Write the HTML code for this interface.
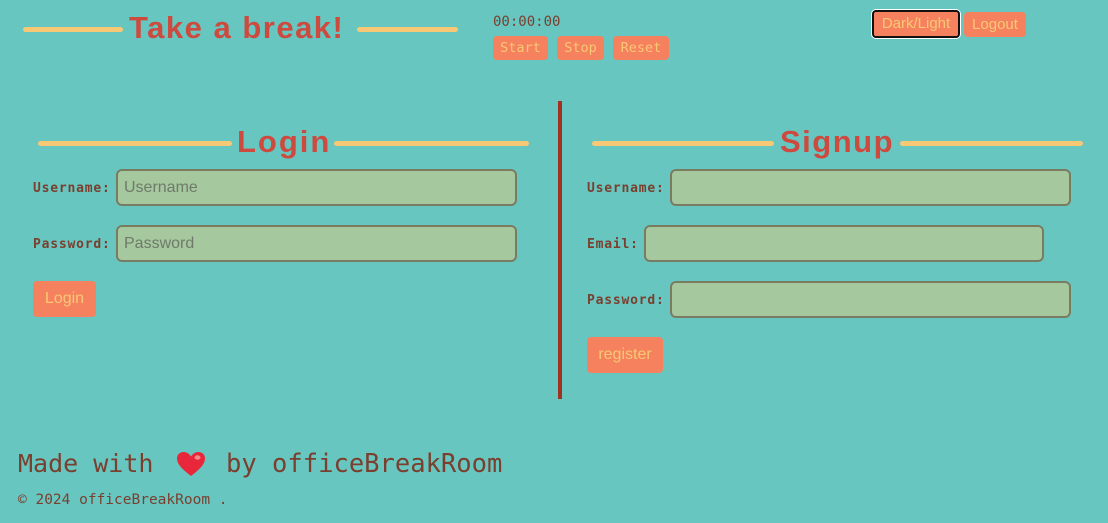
<!DOCTYPE html>
<html><head><meta charset="utf-8"><style>
body{margin:0;width:1108px;height:523px;background:#67c6c0;position:relative;overflow:hidden;font-family:"Liberation Sans",sans-serif}
.a{position:absolute}
.line{position:absolute;height:5px;background:#f9c874;border-radius:3px}
.h{position:absolute;color:#cd4a3f;font-size:31px;font-weight:bold;white-space:nowrap}
.btn{position:absolute;background:#f6815f;color:#f9c874;border-radius:4px;font-size:15px;text-align:center}
.mb{position:absolute;background:#f6815f;color:#f9c874;border-radius:4px;font-family:"DejaVu Sans Mono",monospace;font-size:13.5px;text-align:center;height:24px;line-height:24px}
.lab{position:absolute;font-family:"DejaVu Sans Mono",monospace;font-weight:bold;font-size:13px;letter-spacing:0.8px;color:#7a3f2e}
.in{position:absolute;background:#a6c89e;border:2px solid #7a7c62;border-radius:6px;box-sizing:border-box;height:37px;color:#6f7a6a;font-size:16px;line-height:33px;padding-left:6px}
</style></head><body>
<div class="line" style="left:23px;top:27px;width:100px"></div>
<div class="h" style="left:129px;top:10px;letter-spacing:1.5px">Take a break!</div>
<div class="line" style="left:357px;top:27px;width:101px"></div>
<div class="a" style="left:493px;top:14px;font-family:'DejaVu Sans Mono',monospace;font-size:14px;color:#7a3f2e">00:00:00</div>
<div class="mb" style="left:493px;top:36px;width:55px">Start</div>
<div class="mb" style="left:557px;top:36px;width:47px">Stop</div>
<div class="mb" style="left:613px;top:36px;width:56px">Reset</div>
<div class="btn" style="left:872px;top:10px;width:84px;height:24px;line-height:24px;border:2px solid #111;box-shadow:0 0 0 1px #fff">Dark/Light</div>
<div class="btn" style="left:964px;top:12px;width:62px;height:25px;line-height:25px">Logout</div>

<div class="line" style="left:38px;top:141px;width:194px"></div>
<div class="h" style="left:237px;top:124px;letter-spacing:2px">Login</div>
<div class="line" style="left:334px;top:141px;width:195px"></div>
<div class="lab" style="left:33px;top:181px">Username:</div>
<div class="in" style="left:116px;top:169px;width:401px">Username</div>
<div class="lab" style="left:33px;top:237px">Password:</div>
<div class="in" style="left:116px;top:225px;width:401px">Password</div>
<div class="btn" style="left:33px;top:281px;width:63px;height:36px;line-height:36px;font-size:16px">Login</div>

<div class="a" style="left:558px;top:101px;width:4px;height:298px;background:#a3301f"></div>

<div class="line" style="left:592px;top:141px;width:182px"></div>
<div class="h" style="left:780px;top:124px;letter-spacing:1.5px">Signup</div>
<div class="line" style="left:900px;top:141px;width:183px"></div>
<div class="lab" style="left:587px;top:181px">Username:</div>
<div class="in" style="left:670px;top:169px;width:401px"></div>
<div class="lab" style="left:587px;top:237px">Email:</div>
<div class="in" style="left:644px;top:225px;width:400px"></div>
<div class="lab" style="left:587px;top:293px">Password:</div>
<div class="in" style="left:670px;top:281px;width:401px"></div>
<div class="btn" style="left:587px;top:337px;width:76px;height:36px;line-height:36px;font-size:16px">register</div>

<div class="a" style="left:18px;top:449px;font-family:'DejaVu Sans Mono',monospace;font-size:25px;color:#7a3f2e;white-space:pre">Made with</div>
<div class="a" style="left:226px;top:449px;font-family:'DejaVu Sans Mono',monospace;font-size:25.5px;color:#7a3f2e;white-space:pre">by officeBreakRoom</div>
<svg class="a" style="left:176px;top:451px" width="30" height="26" viewBox="0 0 30 26"><path d="M15 25 C6 18 1 13 1 7.5 C1 3.5 4 1 7.5 1 C11 1 13.5 3 15 5.5 C16.5 3 19 1 22.5 1 C26 1 29 3.5 29 7.5 C29 13 24 18 15 25Z" fill="#e8283a"/><ellipse cx="21.5" cy="6.5" rx="3" ry="2.2" fill="#f58a8a"/></svg>
<div class="a" style="left:18px;top:492px;font-family:'DejaVu Sans Mono',monospace;font-size:14.5px;color:#7a3f2e">© 2024 officeBreakRoom .</div>
</body></html>
